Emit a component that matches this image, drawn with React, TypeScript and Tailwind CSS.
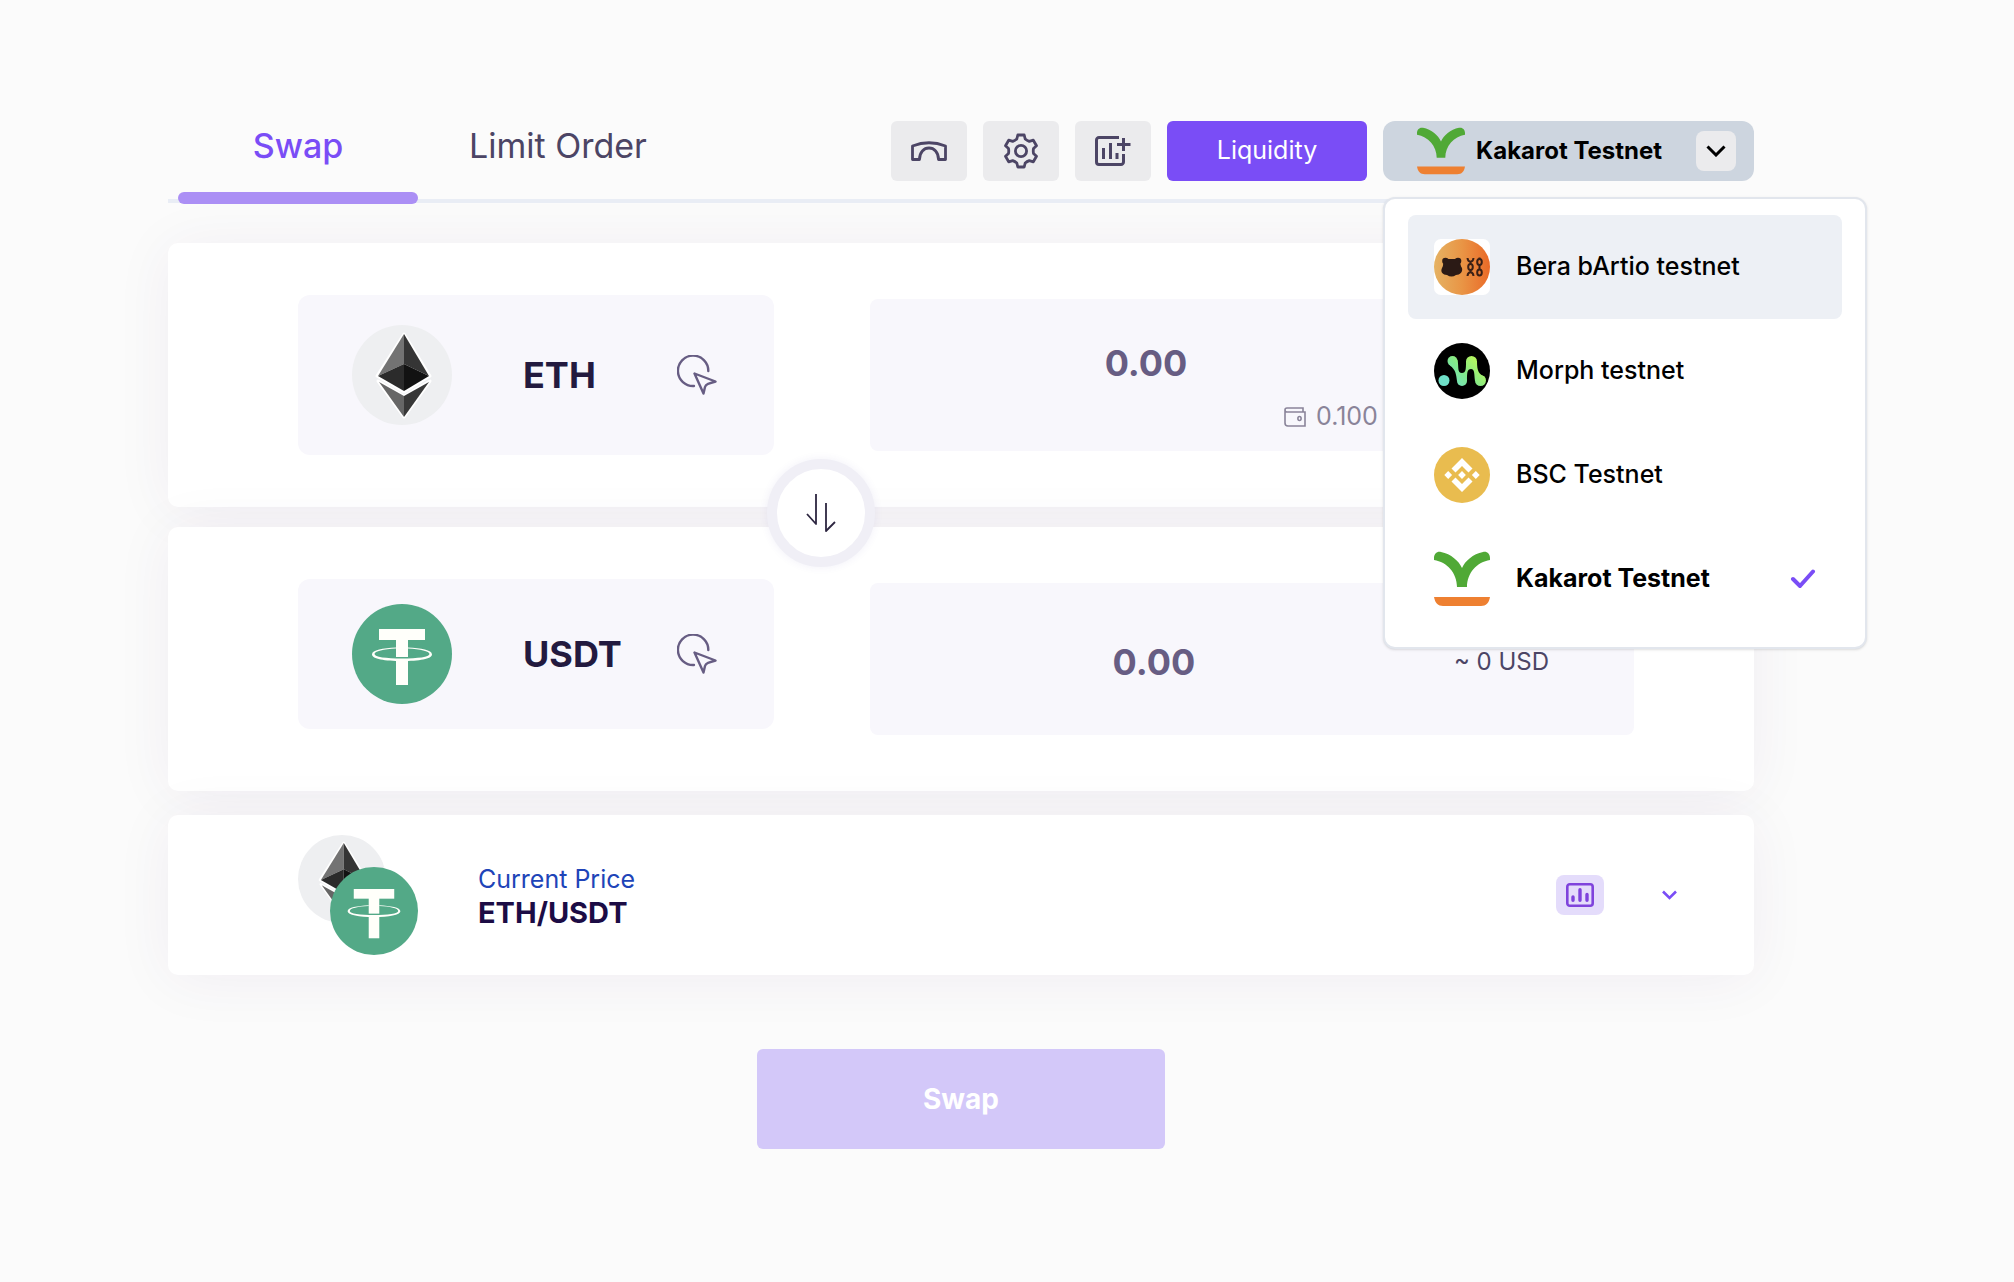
import { useState } from "react";

function EthLogo({ className }: { className?: string }) {
  return (
    <svg viewBox="0 0 100 100" className={className} aria-hidden="true">
      <circle cx="50" cy="50" r="50" fill="#eeeff1" />
      <path d="M52 9 25 51 52 67 78 51ZM26 56 52 92 78 56 52 71Z" fill="#fff" stroke="#fff" strokeWidth="3" strokeLinejoin="round" />
      <path d="M52 9 26 51 52 39Z" fill="#737373" />
      <path d="M52 9 77 51 52 39Z" fill="#353535" />
      <path d="M52 39 26 51 52 66Z" fill="#2b2b2b" />
      <path d="M52 39 77 51 52 66Z" fill="#121212" />
      <path d="M27 57 52 71V92Z" fill="#666" />
      <path d="M77 57 52 71V92Z" fill="#383838" />
    </svg>
  );
}

function UsdtLogo({ className }: { className?: string }) {
  return (
    <svg viewBox="0 0 100 100" className={className} aria-hidden="true">
      <circle cx="50" cy="50" r="50" fill="#53a987" />
      <rect x="27" y="25" width="46" height="11" fill="#fffffa" />
      <rect x="44" y="35" width="12" height="18" fill="#fffffa" />
      <rect x="44" y="56" width="12" height="25" fill="#fffffa" />
      <path
        fill="#fffffa"
        fillRule="evenodd"
        d="M44 43.6C31 44.4 20 46 20 50.4S33 57 50 57s30-2.2 30-6.6S69 44.400 56 43.600v.8C68 45 77.500 47 77.500 50S66 54.500 50 54.500 22.500 53 22.500 50 32 45 44 44.400Z"
      />
    </svg>
  );
}

function KakarotLogo({ className }: { className?: string }) {
  return (
    <svg viewBox="0 0 56 56" className={className} aria-hidden="true">
      <path d="M0 7C0 3 3 0 7 1 17 3 25 10 28 17 31 10 39 3 49 1 53 0 56 3 56 7V9C43 11 33 22 33 36H23C23 22 13 11 0 9Z" fill="#50a936" />
      <path d="M0 46H56C55 52 52 55 47 55H9C4 55 1 52 0 46Z" fill="#ee8031" />
    </svg>
  );
}

function BeraLogo({ className }: { className?: string }) {
  return (
    <svg viewBox="0 0 56 56" className={className} aria-hidden="true">
      <defs>
        <linearGradient id="bera" x1="0" x2="1">
          <stop offset="0" stopColor="#e5b263" />
          <stop offset="0.5" stopColor="#e99545" />
          <stop offset="1" stopColor="#ea6a28" />
        </linearGradient>
      </defs>
      <rect width="56" height="56" rx="7" fill="#fff" />
      <circle cx="28" cy="28" r="28" fill="url(#bera)" />
      <g fill="#2b1a15">
        <circle cx="11.5" cy="22" r="3.3" />
        <circle cx="24" cy="22" r="3.3" />
        <path d="M12 20H23C27 22 26 27 28 29 29 33 26 36 22 36 19 38 16 38 13 36 9 36 6 33 8 29 10 27 8 22 12 20Z" />
      </g>
      <g fill="none" stroke="#3a2016" strokeWidth="2">
        <path d="M33.500 19C34 24 39 24 39.500 19M36.500 22.500V25M36.500 31V33M33.500 37C34 32 39 32 39.500 37" />
        <ellipse cx="36.5" cy="28" rx="2.300" ry="3" />
        <ellipse cx="45.5" cy="23" rx="2.300" ry="3" />
        <ellipse cx="45.5" cy="33.5" rx="2.300" ry="3" />
        <path d="M45.500 26V30.500M45.500 18.500V20" />
      </g>
    </svg>
  );
}

function MorphLogo({ className }: { className?: string }) {
  return (
    <svg viewBox="0 0 56 56" className={className} aria-hidden="true">
      <defs>
        <linearGradient id="morph" gradientUnits="userSpaceOnUse" x1="14" y1="42" x2="42" y2="16">
          <stop offset="0" stopColor="#72e3d0" />
          <stop offset="0.5" stopColor="#7fe88e" />
          <stop offset="1" stopColor="#b6f75e" />
        </linearGradient>
      </defs>
      <circle cx="28" cy="28" r="28" fill="#000" />
      <circle cx="10" cy="37.5" r="5.5" fill="#6fe0c8" />
      <g fill="url(#morph)">
        <circle cx="18.5" cy="18" r="5" />
        <circle cx="28" cy="38" r="5" />
        <circle cx="37.5" cy="18.5" r="5.5" />
        <circle cx="46.5" cy="37.5" r="5.5" />
        <path d="M14.500 21C18 25 22 25 23 38H33C33 30 33 26 37 26 41 26 40 31 41 38L51 34C45 31 43 29 43 18H32C32 26 32 30 28 30 23 30 25 24 23.500 17Z" />
      </g>
    </svg>
  );
}

function BscLogo({ className }: { className?: string }) {
  return (
    <svg viewBox="0 0 56 56" className={className} aria-hidden="true">
      <circle cx="28" cy="28" r="28" fill="#e9bc4f" />
      <path
        fill="#fff"
        d="M28 11 38.500 21.500 34.500 25.500 28 19 21.500 25.500 17.500 21.500ZM28 45 38.500 34.500 34.500 30.500 28 37 21.500 30.500 17.500 34.500ZM14.200 24.100 18.100 28 14.200 31.900 10.300 28ZM41.800 24.100 45.700 28 41.800 31.900 37.900 28ZM28 24.100 31.900 28 28 31.900 24.100 28Z"
      />
    </svg>
  );
}

function BridgeIcon() {
  return (
    <svg width="36" height="20" viewBox="0 0 36 20" fill="none" stroke="#4c4565" strokeWidth="2.800" strokeLinejoin="round" aria-hidden="true">
      <path d="M1.500 5Q18-1.500 34.500 5V18.500H27.500C27.500 11 23 7 18 7S8.500 11 8.500 18.500H1.500Z" />
    </svg>
  );
}

function GearIcon() {
  return (
    <svg width="36" height="36" viewBox="-18 -18 36 36" fill="none" stroke="#4c4565" strokeWidth="2.800" strokeLinejoin="round" aria-hidden="true">
      <path d="M-3.200-16H3.200L4.200-12Q6-10.400 8.300-9.600L12.300-10.800 15.500-5.200 12.500-2.400Q12 0 12.500 2.400L15.500 5.200 12.300 10.800 8.300 9.600Q6 10.400 4.200 12L3.200 16H-3.200L-4.200 12Q-6 10.400-8.300 9.600L-12.300 10.800-15.500 5.200-12.500 2.400Q-12 0-12.500-2.400L-15.500-5.200-12.300-10.800-8.300-9.600Q-6-10.400-4.200-12Z" />
      <circle r="5.6" />
    </svg>
  );
}

function AddChartIcon() {
  return (
    <svg width="36" height="32" viewBox="0 0 36 32" fill="none" stroke="#4c4565" strokeWidth="3" aria-hidden="true">
      <path d="M24 2.500H4A2.500 2.500 0 0 0 1.500 5V27A2.500 2.500 0 0 0 4 29.500H26A2.500 2.500 0 0 0 28.500 27V19M28.500 3V16M22 9.500H35.500M8.500 13V24M15.500 8V24M22 18V24" />
    </svg>
  );
}

function PickIcon() {
  return (
    <svg width="40" height="40" viewBox="0 0 40 40" fill="none" stroke="#675d83" strokeWidth="2.400" strokeLinecap="round" strokeLinejoin="round" aria-hidden="true">
      <path d="M31.300 16A15.200 15.200 0 1 0 17 31" />
      <path d="M17.500 18.500 38.500 26.500 31 28.800Q28.500 29.800 28 32L26.500 38.500Z" />
    </svg>
  );
}

function FlipIcon() {
  return (
    <svg width="30" height="40" viewBox="0 0 30 40" fill="none" stroke="#2d2640" strokeWidth="1.800" strokeLinejoin="round" aria-hidden="true">
      <path d="M10 1V31L1 21M20 10V38L29 29" />
    </svg>
  );
}

function WalletIcon() {
  return (
    <svg width="22" height="20" viewBox="0 0 22 20" fill="none" stroke="#8a8499" strokeWidth="1.600" aria-hidden="true">
      <path d="M19 5V1H3A2 2 0 0 0 3 5H21V19H4A3 3 0 0 1 1 16V3" />
      <ellipse cx="15.5" cy="11.5" rx="1.600" ry="2" />
    </svg>
  );
}

const networks = [
  { name: "Bera bArtio testnet", Logo: BeraLogo },
  { name: "Morph testnet", Logo: MorphLogo },
  { name: "BSC Testnet", Logo: BscLogo },
  { name: "Kakarot Testnet", Logo: KakarotLogo },
];

const iconButton = "flex h-[60px] w-[76px] items-center justify-center rounded-md bg-[#ebebed]";
const card = "relative rounded-[10px] bg-white shadow-[0_4px_60px_rgba(60,10,110,0.06)]";
const tokenButton = "flex w-[476px] shrink-0 items-center rounded-xl bg-[#f8f7fc] pr-[57px] pl-[54px]";
const amountInput = "h-12 min-w-0 flex-1 bg-transparent text-center text-4xl font-bold text-[#675d83] outline-none";

function NetworkSelect() {
  const [open, setOpen] = useState(true);
  const [selected, setSelected] = useState("Kakarot Testnet");
  const current = networks.find((n) => n.name === selected) ?? networks[0];

  return (
    <div className="relative">
      <button
        type="button"
        aria-expanded={open}
        onClick={() => setOpen(!open)}
        className="flex h-[60px] w-[371px] items-center rounded-xl bg-[#cdd5df] pr-[18px] pl-[34px] text-2xl font-bold text-black"
      >
        <current.Logo className="size-12" />
        <span className="ml-[11px] flex-1 text-left whitespace-nowrap">{current.name}</span>
        <span className="flex size-10 items-center justify-center rounded-lg bg-[#ebebed]">
          <svg width="20" height="12" viewBox="0 0 20 12" fill="none" stroke="#000" strokeWidth="3" aria-hidden="true">
            <path d="M1.500 1.500 10 10 18.500 1.500" />
          </svg>
        </span>
      </button>
      {open && (
        <ul className="absolute top-[76px] left-0 z-20 w-[484px] rounded-xl border-2 border-[#e2e6ed] bg-white px-[23px] py-4 shadow-sm">
          {networks.map(({ name, Logo }, idx) => (
            <li key={name}>
              <button
                type="button"
                onClick={() => setSelected(name)}
                className={`flex h-[104px] w-full items-center gap-[26px] rounded-lg px-[26px] text-left text-[25px] text-black ${idx === 0 ? "bg-[#edf0f5]" : ""} ${name === selected ? "font-bold" : "font-medium"}`}
              >
                <Logo className="size-14" />
                <span className="flex-1">{name}</span>
                {name === selected && (
                  <svg width="26" height="20" viewBox="0 0 26 20" fill="none" stroke="#7a4df6" strokeWidth="4" strokeLinecap="round" strokeLinejoin="round" aria-hidden="true">
                    <path d="M3 10 10 17 23 2.500" />
                  </svg>
                )}
              </button>
            </li>
          ))}
        </ul>
      )}
    </div>
  );
}

export default function App() {
  return (
    <div className="min-h-screen bg-[#fbfbfb] pt-[121px] pr-[260px] pb-[133px] pl-[168px] font-['Inter',sans-serif]">
      <header className="flex items-start justify-between border-b-4 border-[#e9edf5]">
        <nav className="flex gap-5 pl-[10px] text-[34px] leading-[48px]">
          <button type="button" className="relative h-[78px] w-60 pb-7 font-medium text-[#7a4df6]">
            Swap
            <span className="absolute top-[71px] left-0 h-3 w-full rounded-md bg-[#ab8ff5]" />
          </button>
          <button type="button" className="h-[78px] w-60 pb-7 text-[#4c4565]">
            Limit Order
          </button>
        </nav>
        <div className="flex gap-4">
          <button type="button" aria-label="Bridge" className={iconButton}>
            <BridgeIcon />
          </button>
          <button type="button" aria-label="Settings" className={iconButton}>
            <GearIcon />
          </button>
          <button type="button" aria-label="Add chart" className={iconButton}>
            <AddChartIcon />
          </button>
          <button type="button" className="h-[60px] w-[200px] rounded-md bg-[#7a4df6] text-[25px] text-white">
            Liquidity
          </button>
          <NetworkSelect />
        </div>
      </header>

      <main className="mt-10 flex flex-col">
        <section className={`${card} flex h-[264px] items-start gap-24 pt-[52px] pr-[120px] pl-[130px]`}>
          <button type="button" className={`${tokenButton} h-40`}>
            <EthLogo className="size-[100px]" />
            <span className="ml-[71px] flex-1 text-left text-4xl font-bold text-[#231a3f]">ETH</span>
            <PickIcon />
          </button>
          <div className="mt-1 flex h-[152px] min-w-0 flex-1 flex-col rounded-lg bg-[#f8f7fc] pt-10">
            <div className="flex items-center pr-[212px]">
              <input aria-label="ETH amount" defaultValue="0.00" className={amountInput} />
            </div>
            <div className="mt-[11px] flex items-center gap-[10px] pl-[414px] text-[25px] text-[#8a8499]">
              <WalletIcon />
              0.100
            </div>
          </div>
        </section>

        <section className={`${card} mt-5 flex h-[264px] items-start gap-24 pt-[52px] pr-[120px] pl-[130px]`}>
          <button
            type="button"
            aria-label="Switch tokens"
            className="absolute -top-[68px] left-[653px] z-10 flex size-[108px] -translate-x-1/2 items-center justify-center rounded-full border-[10px] border-[#f0eff6] bg-white shadow-[0_0_8px_rgba(80,60,160,0.08)]"
          >
            <FlipIcon />
          </button>
          <button type="button" className={`${tokenButton} h-[150px]`}>
            <UsdtLogo className="size-[100px]" />
            <span className="ml-[71px] flex-1 text-left text-4xl font-bold text-[#231a3f]">USDT</span>
            <PickIcon />
          </button>
          <div className="mt-1 flex h-[152px] min-w-0 flex-1 items-center rounded-lg bg-[#f8f7fc] pt-[6px] pr-[85px]">
            <input aria-label="USDT amount" defaultValue="0.00" className={amountInput} />
            <span className="pl-4 text-2xl text-[#4c4565]">~ 0 USD</span>
          </div>
        </section>

        <section className={`${card} mt-6 flex items-center py-5 pr-[76px] pl-[130px]`}>
          <div className="relative size-[120px]">
            <EthLogo className="size-[88px]" />
            <UsdtLogo className="absolute right-0 bottom-0 size-[88px]" />
          </div>
          <div className="ml-[60px] flex-1 pt-1">
            <p className="text-[25px] leading-8 text-[#2044b8]">Current Price</p>
            <p className="text-[29px] leading-9 font-bold text-[#1c0c45]">ETH/USDT</p>
          </div>
          <button type="button" aria-label="Show chart" className="flex h-10 w-12 items-center justify-center rounded-lg bg-[#e4dcfb]">
            <svg width="28" height="24" viewBox="0 0 28 24" fill="none" stroke="#7f43dc" strokeWidth="2.600" strokeLinecap="round" aria-hidden="true">
              <rect x="1.300" y="1.300" width="25.400" height="21.400" rx="2.500" />
              <path strokeWidth="3.400" d="M7 14V17.200M14 6.700V17.200M21 11.500V17.200" />
            </svg>
          </button>
          <button type="button" aria-label="Show details" className="ml-[57px] p-px">
            <svg width="15" height="10" viewBox="0 0 15 10" fill="none" stroke="#7a4df6" strokeWidth="2.600" aria-hidden="true">
              <path d="M1 1.500 7.500 8 14 1.500" />
            </svg>
          </button>
        </section>

        <button type="button" className="mt-[74px] h-[100px] w-[408px] self-center rounded-md bg-[#d3c8f9] text-[28px] font-bold text-white">
          Swap
        </button>
      </main>
    </div>
  );
}
